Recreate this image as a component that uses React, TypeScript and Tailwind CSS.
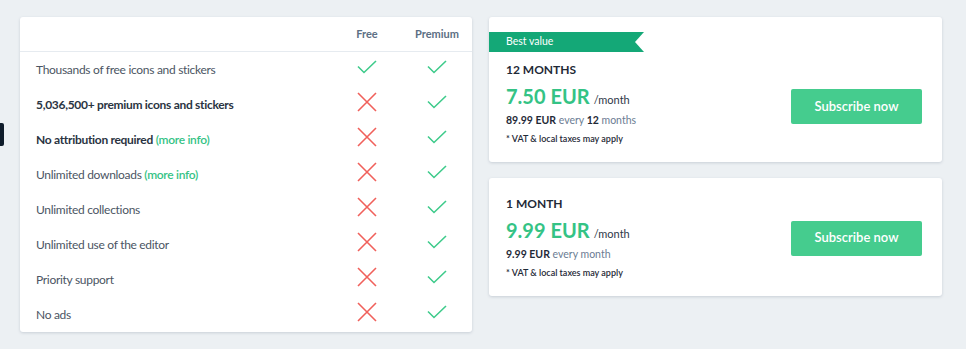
import React from "react";

type Feature = {
  label: string;
  bold?: boolean;
  moreInfo?: boolean;
  free: boolean;
};

const features: Feature[] = [
  { label: "Thousands of free icons and stickers", free: true },
  { label: "5,036,500+ premium icons and stickers", bold: true, free: false },
  { label: "No attribution required", bold: true, moreInfo: true, free: false },
  { label: "Unlimited downloads", moreInfo: true, free: false },
  { label: "Unlimited collections", free: false },
  { label: "Unlimited use of the editor", free: false },
  { label: "Priority support", free: false },
  { label: "No ads", free: false },
];

const Check = () => (
  <svg width="20" height="14" viewBox="0 0 20 14" fill="none">
    <path d="M1 6.5 L7 12.5 L19 1" stroke="#3ecb8b" strokeWidth="1.6" />
  </svg>
);

const Cross = () => (
  <svg width="20" height="20" viewBox="0 0 20 20" fill="none">
    <path d="M1 1 L19 19 M19 1 L1 19" stroke="#f0605b" strokeWidth="1.6" />
  </svg>
);

const PlanCard = ({
  ribbon,
  title,
  price,
  total,
  every,
  everyBold,
  everyAfter,
}: {
  ribbon?: boolean;
  title: string;
  price: string;
  total: string;
  every: string;
  everyBold?: string;
  everyAfter?: string;
}) => (
  <div
    className={`bg-white rounded-[3px] shadow-[0_1px_3px_rgba(40,60,90,0.18)] pb-[15px] ${
      ribbon ? "pt-[15px]" : "pt-[17px]"
    }`}
  >
    {ribbon && (
      <div className="relative h-5 w-[155px] bg-[#14a877] flex items-center pl-[17px] text-white text-[10.5px] mb-[9px]">
        Best value
        <div className="absolute right-0 top-0 w-0 h-0 border-t-[10px] border-b-[10px] border-r-[9px] border-t-transparent border-b-transparent border-r-white" />
      </div>
    )}
    <div className="flex items-center justify-between pl-[17px] pr-5">
      <div className="flex flex-col">
        <div className="text-[12px] leading-[18px] font-bold text-[#1f2a37]">{title}</div>
        <div className="flex items-baseline mt-[2px] h-[30px]">
          <span className="text-[20px] leading-[30px] font-bold text-[#34c385]">{price}</span>
          <span className="text-[11px] text-[#2e3847] ml-[4px]">/month</span>
        </div>
        <div className="text-[10.5px] leading-[16px] mt-[1px]">
          <span className="font-bold text-[#1f2a37]">{total}</span>{" "}
          <span className="text-[#6b7c93]">{every}</span>
          {everyBold && (
            <>
              {" "}
              <span className="font-bold text-[#1f2a37]">{everyBold}</span>{" "}
              <span className="text-[#6b7c93]">{everyAfter}</span>
            </>
          )}
        </div>
        <div className="text-[9px] leading-[16px] font-semibold text-[#1f2a37] mt-[3px]">
          * VAT &amp; local taxes may apply
        </div>
      </div>
      <button
        className={`w-[131px] h-[35px] rounded-[2px] bg-[#45cc8e] text-white text-[13px] font-semibold ${
          ribbon ? "mt-[5px]" : ""
        }`}
      >
        Subscribe now
      </button>
    </div>
  </div>
);

const App = () => {
  return (
    <div
      className="relative w-[966px] h-[349px] bg-[#ecf0f3] flex gap-[17px] pl-5 pt-[17px]"
      style={{ fontFamily: "Lato, 'Open Sans', sans-serif" }}
    >
      <div className="absolute left-0 top-[123px] w-[4px] h-[23px] bg-[#0f1c2b] rounded-r-[2px]" />
      <div className="w-[452px] h-[315px] bg-white rounded-[3px] shadow-[0_1px_3px_rgba(40,60,90,0.18)] flex flex-col">
        <div className="flex h-[35px] items-center border-b border-[#e6ebf0]">
          <div className="flex-1" />
          <div className="w-[70px] text-center text-[11px] font-bold text-[#5c6f84]">Free</div>
          <div className="w-[70px] text-center text-[11px] font-bold text-[#5c6f84]">Premium</div>
        </div>
        {features.map((f, i) => (
          <div key={i} className="flex h-[35px] items-center">
            <div
              className={`flex-1 pl-4 text-[12px] tracking-[-0.3px] ${
                f.bold ? "font-bold text-[#2a3442]" : "text-[#4b5563]"
              }`}
            >
              {f.label}
              {f.moreInfo && (
                <span className="font-semibold text-[#35c386]"> (more info)</span>
              )}
            </div>
            <div className="w-[70px] flex justify-center mb-[6px]">{f.free ? <Check /> : <Cross />}</div>
            <div className="w-[70px] flex justify-center mb-[6px]">
              <Check />
            </div>
          </div>
        ))}
      </div>
      <div className="w-[453px] flex flex-col gap-4">
        <PlanCard
          ribbon
          title="12 MONTHS"
          price="7.50 EUR"
          total="89.99 EUR"
          every="every"
          everyBold="12"
          everyAfter="months"
        />
        <PlanCard title="1 MONTH" price="9.99 EUR" total="9.99 EUR" every="every month" />
      </div>
    </div>
  );
};

export default App;
